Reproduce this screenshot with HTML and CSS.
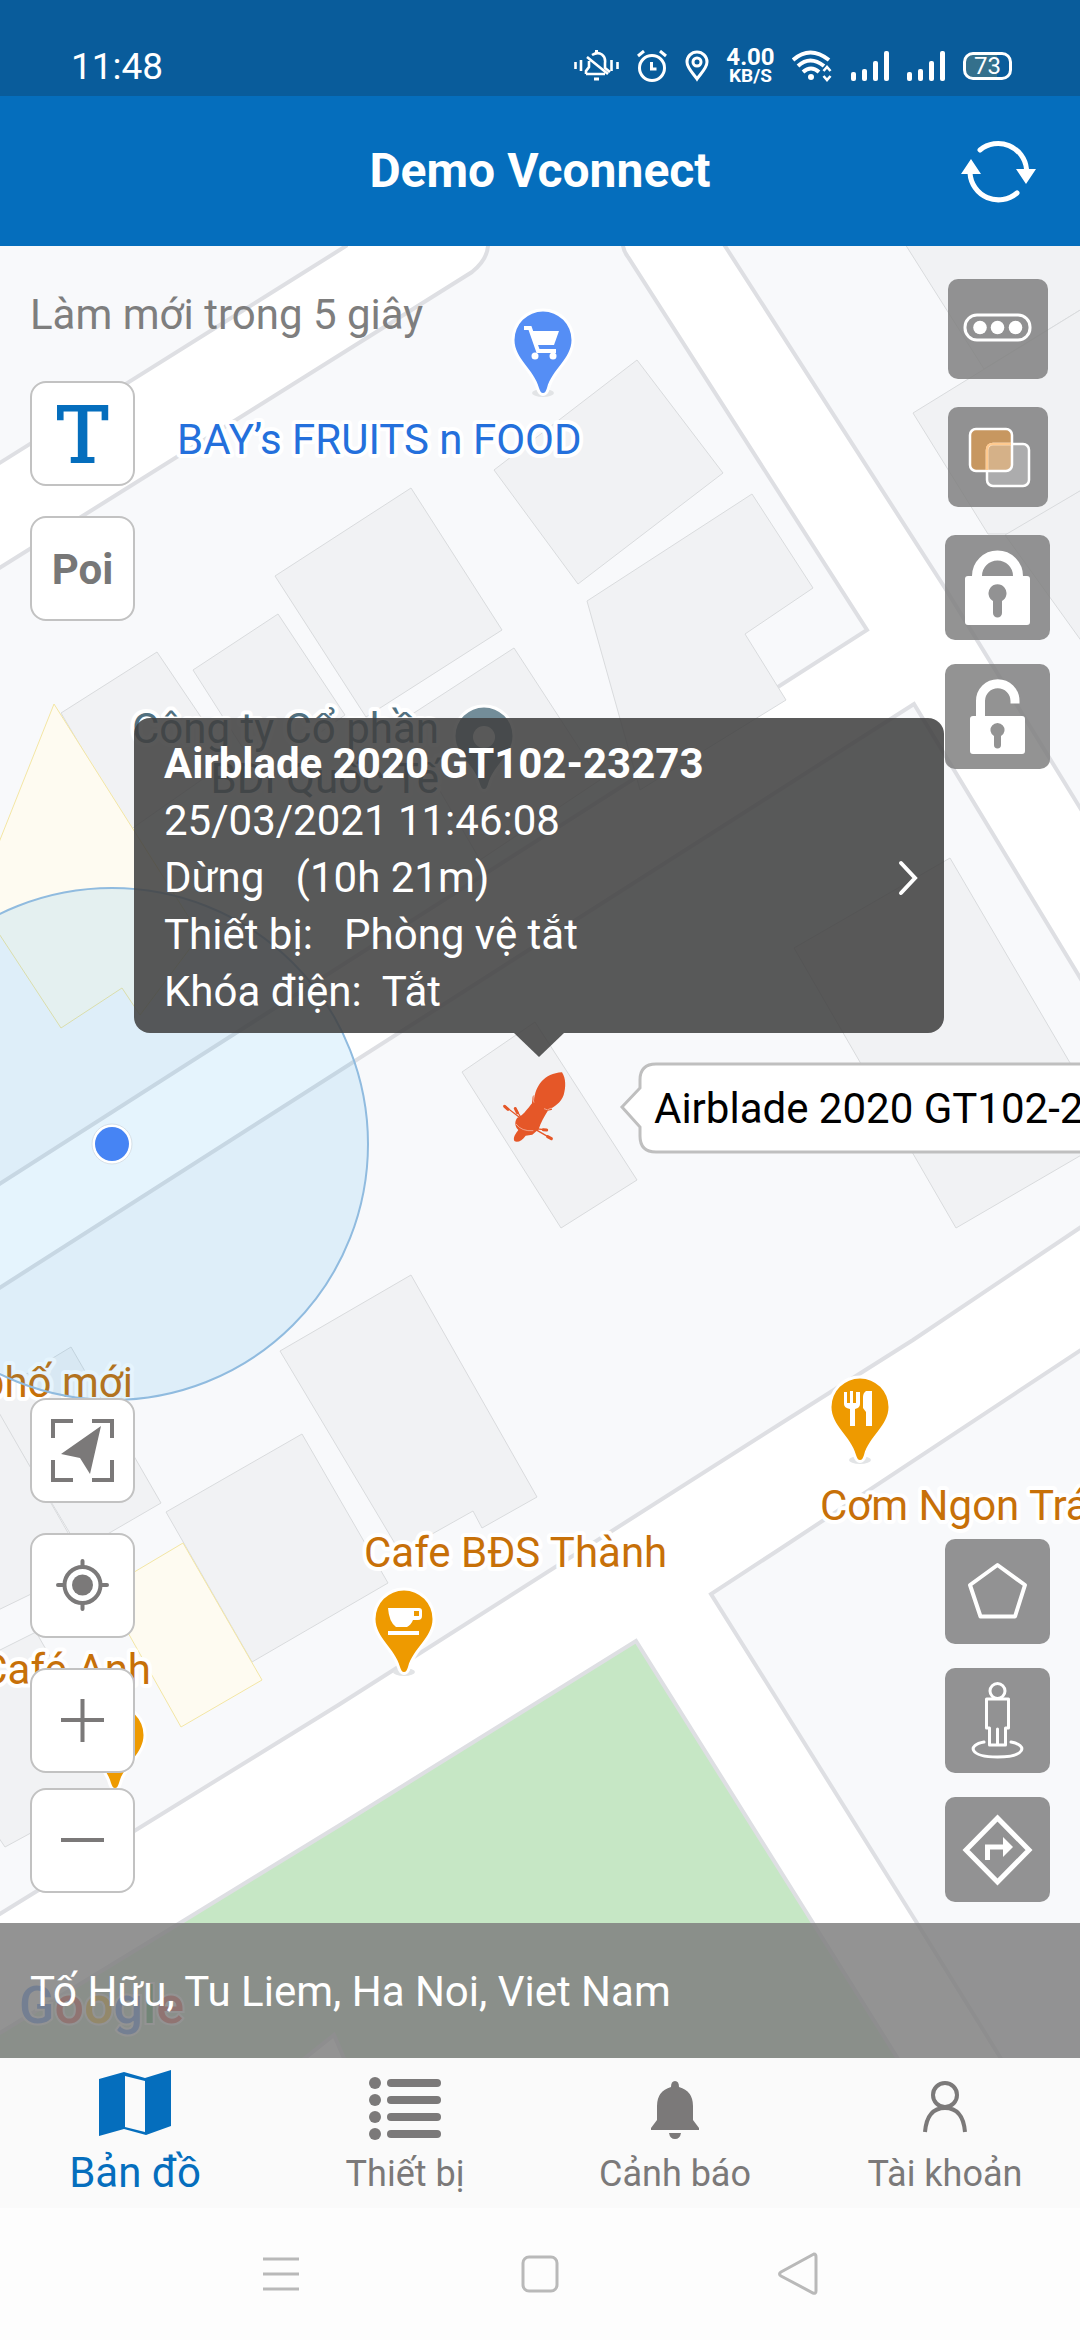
FILE: index.html
```html
<!DOCTYPE html>
<html lang="vi">
<head>
<meta charset="utf-8">
<meta name="viewport" content="width=device-width, initial-scale=1">
<title>Demo Vconnect</title>
<link rel="stylesheet" href="styles.css">
</head>
<body>
<div class="status">
  <span class="clock">11:48</span>
  <div class="status-icons">
    <svg width="45" height="32" viewBox="0 0 45 32" fill="none" stroke="#fff" stroke-width="2.6">
      <path d="M1.500 12v7M7 10v11M37.500 10v11M43.500 12v7"/>
      <path d="M12 24h19M12 24v-3l3-4v-6M18 5c8-5 14 1 13 8v5l5 4M13 7l21 17"/>
      <path d="M22.500 0v3M20 29h5" stroke-width="3"/>
    </svg>
    <svg width="30" height="32" viewBox="0 0 30 32" fill="none" stroke="#fff" stroke-width="3">
      <circle cx="15" cy="18" r="12.500"/><path d="M14.500 12v7h5M1 6l6-5M29 6l-6-5"/>
    </svg>
    <svg width="24" height="32" viewBox="0 0 24 32" fill="none" stroke="#fff" stroke-width="3">
      <path d="M12 29C8 23 2 18 2 12a10 10 0 0 1 20 0c0 6-6 11-10 17z"/><circle cx="12" cy="12" r="4"/>
    </svg>
    <span class="speed"><b>4.00</b><b class="unit">KB/S</b></span>
    <svg width="41" height="32" viewBox="0 0 41 32" fill="none" stroke="#fff" stroke-width="4">
      <path d="M1 10q17-15 36 0M6 16q12-11 26 0M11 22q8-7 16 0"/><circle cx="19" cy="27" r="3" fill="#fff" stroke="none"/>
      <path d="M31.500 21l3.500-4 3.500 4M31.500 26l3.500 4 3.500-4" stroke-width="2.600"/>
    </svg>
    <svg width="38" height="32" viewBox="0 0 38 32" fill="#fff">
      <rect x="0" y="22" width="5" height="9" rx="2"/><rect x="11" y="19" width="5" height="12" rx="2"/><rect x="22" y="11" width="5" height="20" rx="2"/><rect x="33" y="1" width="5" height="30" rx="2"/>
    </svg>
    <svg width="38" height="32" viewBox="0 0 38 32" fill="#fff">
      <rect x="0" y="22" width="5" height="9" rx="2"/><rect x="11" y="19" width="5" height="12" rx="2"/><rect x="22" y="11" width="5" height="20" rx="2"/><rect x="33" y="1" width="5" height="30" rx="2"/>
    </svg>
    <span class="battery">73</span>
  </div>
</div>

<header class="appbar">
  <h1>Demo Vconnect</h1>
  <button class="refresh" aria-label="Làm mới">
    <svg width="76" height="66" viewBox="959 137 76 66" fill="none" stroke="#fff" stroke-width="5" stroke-linecap="round">
      <path d="M979 149A28.500 28.500 0 0 1 1025.500 168M969 172A28.500 28.500 0 0 0 1016 192"/>
      <path d="M1015 168h20l-10 15zM960 173h20l-10-15z" fill="#fff" stroke="none"/>
    </svg>
  </button>
</header>

<main class="map">
  <svg class="map-canvas" viewBox="0 246 1080 1812" preserveAspectRatio="xMinYMin slice">
    <defs>
      <path id="pin" d="M0 0C-2 0-3-2-4-5C-9-24-28.500-34-28.500-53A28.500 28.500 0 0 1 28.500-53C28.500-34 9-24 4-5C3-2 2 0 0 0Z"/>
    </defs>
    <rect y="246" width="1080" height="1812" class="land"/>

    <!-- roads -->
    <g class="road">
      <path d="M-10 469L346 246V236H488V246Q487 260 472 272L-10 574Z"/>
      <path d="M623 236V246Q624 252 628 257L867 630L-10 1190V1294L914 704L1090 994V824L945 588L725 246L718 236Z"/>
      <path d="M1090 1221L913 1340L780 1424L340 1704L-10 1920V2070H1008L917 1923L780 1704L711 1594L780 1549L1090 1344Z"/>
    </g>
    <path class="park" d="M-10 2039L180 1923L340 1825L636 1641L813 1923L905 2070H349L334 2035L290 2070H-10Z"/>

    <g class="building">
      <path d="M411 488L502 630L366 717L275 576Z"/>
      <path d="M278 614L345 715L260 775L193 670Z"/>
      <path d="M157 652L230 760L130 830L61 713Z"/>
      <path d="M514 648L600 780L480 860L400 722Z"/>
      <path d="M637 360L723 473L578 584L494 470Z"/>
      <path d="M752 494L813 588L745 634L786 700L640 790L587 601Z"/>
      <path d="M900 236L984 369L1090 304V236Z"/>
      <path d="M1090 304L913 413L988 534L1010 534L1090 485Z"/>
      <path d="M1090 485L1005 535L1090 653Z"/>
      <path d="M950 858L794 948L956 1228L1090 1150V1097Z"/>
      <path d="M535 1022L462 1072L561 1228L637 1180Z"/>
      <path d="M411 1275L537 1497L482 1528L473 1511L400 1552L280 1351Z"/>
      <path d="M302 1434L388 1583L252 1662L166 1512Z"/>
      <path d="M71 1347L161 1503L80 1550L-10 1400V1396Z"/>
      <path d="M-10 1397L75 1545L60 1580L-10 1614Z"/>
      <path d="M-10 1655L36 1632L115 1770L110 1790L5 1847L-10 1825Z"/>
    </g>
    <g class="shop">
      <path d="M54 704L200 935L140 1015L122 988L61 1028L-10 920V865Z"/>
      <path d="M183 1543L262 1680L181 1727L104 1590Z"/>
    </g>

    <!-- places -->
    <g class="place blue">
      <ellipse class="pin-shadow" cx="543" cy="393" rx="11" ry="4"/>
      <use href="#pin" x="543" y="393"/>
      <path class="glyph-line" d="M524 328h6l8 23h18"/>
      <path class="glyph" d="M531 331h28l-5 14h-19z"/><circle class="glyph" cx="535" cy="356" r="3.500"/><circle class="glyph" cx="553" cy="356" r="3.500"/>
      <text x="177" y="454">BAY’s FRUITS n FOOD</text>
    </g>
    <g class="place grey">
      <use href="#pin" x="484" y="789"/><circle class="glyph" cx="484" cy="737" r="11"/>
      <text x="439" y="743" text-anchor="end">Công ty Cổ phần</text>
      <text x="439" y="793" text-anchor="end">BDI Quốc Tế</text>
    </g>
    <g class="place orange">
      <ellipse class="pin-shadow" cx="860" cy="1460" rx="11" ry="4"/>
      <use href="#pin" x="860" y="1460"/>
      <path class="glyph" d="M844 1392h3v11h3v-12h3v12h3v-11h4v12q0 4-5 5v17h-5v-17q-6-1-6-5zM866 1391h6v35h-6v-14l-3-4v-11q0-4 3-6z"/>
      <text x="820" y="1520">Cơm Ngon Trá</text>
      <ellipse class="pin-shadow" cx="404" cy="1672" rx="11" ry="4"/>
      <use href="#pin" x="404" y="1672"/>
      <path class="glyph" fill-rule="evenodd" d="M388 1608h31q3 0 3 3v5q0 4-4 4h-5q-2 5-6 7h-11q-7-5-8-19zM414 1611v5h5v-5zM388 1631h31v4h-31z"/>
      <text x="364" y="1567">Cafe BĐS Thành</text>
      <text x="133" y="1397" text-anchor="end">phố mới</text>
      <use href="#pin" x="115" y="1788"/>
      <text x="151" y="1684" text-anchor="end">Café Anh</text>
    </g>
    <text class="google" x="19" y="2023"><tspan fill="#4285f4">G</tspan><tspan fill="#ea4335">o</tspan><tspan fill="#fbbc05">o</tspan><tspan fill="#4285f4">g</tspan><tspan fill="#34a853">l</tspan><tspan fill="#ea4335">e</tspan></text>

    <!-- own position -->
    <circle class="accuracy" cx="112" cy="1144" r="256"/>
    <circle class="me-ring" cx="112" cy="1144" r="20"/>
    <circle class="me" cx="112" cy="1144" r="17"/>

    <!-- vehicle and its name tag -->
    <svg x="480" y="1050" width="120" height="110" viewBox="0 0 360 330">
      <path fill="#e55728" d="M246 67C258 85 258 112 251 135C243 158 222 172 205 180C192 200 182 218 176 238L157 254L137 257C127 272 112 279 103 273C98 262 108 250 115 240C103 228 104 212 112 203C127 198 138 182 162 152C166 108 192 70 246 67Z"/>
      <path stroke="#e55728" stroke-width="4" stroke-linecap="round" fill="none" d="M73 167L118 202M105 174L124 204M166 236L200 240M166 238L214 266M160 140L158 158M195 182L214 178"/>
      <path stroke="#e55728" stroke-width="9" stroke-linecap="round" fill="none" d="M74 169L84 178M106 176L112 188M190 239L200 240M203 260L214 266"/>
      <path stroke="#f1a58c" stroke-width="3" fill="none" d="M108 222Q125 245 160 242M162 135Q156 150 162 158M192 176Q202 184 214 174"/>
    </svg>
    <path class="tag" d="M1090 1064H656Q640 1064 640 1080V1088L622 1107L640 1127V1136Q640 1152 656 1152H1090Z"/>
    <text class="tag-text" x="654" y="1123">Airblade 2020 GT102-23273</text>
  </svg>

  <div class="controls">
    <div class="column left">
      <div class="group">
        <p class="countdown">Làm mới trong 5 giây</p>
        <button class="light type">T</button>
        <button class="light poi">Poi</button>
      </div>
      <div class="group">
        <button class="light" aria-label="Theo dõi xe">
          <svg viewBox="0 0 105 105" fill="none" stroke="#7b7979" stroke-width="4">
            <path d="M43 23H23V40M62 23H82V40M43 82H23V62M62 82H82V62"/>
            <path d="M71 28L31 56L50 60L60 76Z" fill="#7b7979" stroke="none"/>
          </svg>
        </button>
        <button class="light" aria-label="Vị trí của tôi">
          <svg viewBox="0 0 105 105" fill="none" stroke="#7b7979" stroke-width="4" stroke-linecap="round">
            <circle cx="52.500" cy="52" r="18"/><circle cx="52.500" cy="52" r="10.500" fill="#7b7979" stroke="none"/>
            <path d="M52.500 28V34M52.500 70V76M28 52H34M71 52H77"/>
          </svg>
        </button>
        <div class="zoom">
          <button class="light" aria-label="Phóng to">
            <svg viewBox="0 0 105 105" stroke="#7b7979" stroke-width="4"><path d="M31 52H74M52.500 31V74"/></svg>
          </button>
          <button class="light" aria-label="Thu nhỏ">
            <svg viewBox="0 0 105 105" stroke="#7b7979" stroke-width="4"><path d="M31 52H74"/></svg>
          </button>
        </div>
      </div>
    </div>

    <div class="column right">
      <div class="group">
        <button class="dark small" aria-label="Thêm">
          <svg viewBox="0 0 100 100" fill="none" stroke="#fff" stroke-width="3">
            <rect x="17" y="36" width="65" height="25" rx="12"/>
            <g fill="#fff" stroke="none"><circle cx="32" cy="48.500" r="6.800"/><circle cx="49.500" cy="48.500" r="6.800"/><circle cx="67.500" cy="48.500" r="6.800"/></g>
          </svg>
        </button>
        <button class="dark small" aria-label="Lớp bản đồ">
          <svg viewBox="0 0 100 100" fill="none" stroke="#fff" stroke-width="2.500">
            <rect x="22" y="22" width="42" height="42" rx="6" fill="#c79760"/>
            <rect x="39" y="37" width="42" height="42" rx="6" fill="#fff" fill-opacity=".25"/>
            <path d="M39 63V43Q39 37 45 37H63" stroke="#ffca8f"/>
          </svg>
        </button>
        <button class="dark" aria-label="Khóa">
          <svg viewBox="0 0 105 105">
            <path d="M32 43V41A20.500 20.500 0 0 1 73 41V43" fill="none" stroke="#fff" stroke-width="10"/>
            <path fill="#fff" fill-rule="evenodd" d="M23 41H82Q85 41 85 44V87Q85 90 82 90H23Q20 90 20 87V44Q20 41 23 41ZM48 66V78a4.500 4.500 0 0 0 9 0V66A9 9 0 1 0 48 66Z"/>
          </svg>
        </button>
        <button class="dark" aria-label="Mở khóa">
          <svg viewBox="0 0 105 105">
            <path d="M35.500 54V37A17.200 17.200 0 0 1 70 37V39.500" fill="none" stroke="#fff" stroke-width="9"/>
            <path fill="#fff" fill-rule="evenodd" d="M28 52H77Q80 52 80 55V87Q80 90 77 90H28Q25 90 25 87V55Q25 52 28 52ZM49 72V81a3.500 3.500 0 0 0 7 0V72A7 7 0 1 0 49 72Z"/>
          </svg>
        </button>
      </div>
      <div class="group">
        <button class="dark" aria-label="Vùng">
          <svg viewBox="0 0 105 105" fill="none" stroke="#fff" stroke-width="4" stroke-linejoin="round"><path d="M52.500 26L80 46L70 77.500H35.500L25 46Z"/></svg>
        </button>
        <button class="dark" aria-label="Chế độ xem phố">
          <svg viewBox="0 0 105 105" fill="none" stroke="#fff" stroke-width="3" stroke-linejoin="round" stroke-linecap="round">
            <circle cx="52.500" cy="23" r="7.500"/>
            <path d="M41.500 31H63.500V60H60.500V77H44.500V60H41.500ZM52.500 61V76M39 74C22 77 24 89 52.500 89S83 77 66 74"/>
          </svg>
        </button>
        <button class="dark" aria-label="Chỉ đường">
          <svg viewBox="0 0 105 105" fill="none" stroke="#fff" stroke-width="5">
            <path d="M52.500 21L84 53L52.500 85L21 53Z"/><path d="M42.500 63V50H60"/><path d="M58 40L68 50L58 60Z" fill="#fff" stroke="none"/>
          </svg>
        </button>
      </div>
    </div>
  </div>

  <a class="popup" href="#detail">
    <span class="popup-text"><strong>Airblade 2020 GT102-23273</strong>
25/03/2021 11:46:08
Dừng   (10h 21m)
Thiết bị:   Phòng vệ tắt
Khóa điện:  Tắt</span>
    <svg width="20" height="36" viewBox="0 0 20 36" fill="none" stroke="#fff" stroke-width="4" stroke-linecap="round"><path d="M3 3L17 18L3 33"/></svg>
  </a>

  <p class="address">Tố Hữu, Tu Liem, Ha Noi, Viet Nam</p>
</main>

<nav class="tabs">
  <a class="tab active" href="#map">
    <svg viewBox="0 0 72 72"><path fill="#056ebd" fill-rule="evenodd" d="M0 9L25 2L46 8L72 0V56L47 65L25 59L0 66ZM26 6V57L46 62V11Z"/></svg>
    <span>Bản đồ</span>
  </a>
  <a class="tab" href="#devices">
    <svg viewBox="0 0 72 72" fill="#7b7979">
      <circle cx="6" cy="13" r="6"/><circle cx="6" cy="30" r="6"/><circle cx="6" cy="47" r="6"/><circle cx="6" cy="64" r="6"/>
      <rect x="18" y="9" width="54" height="8" rx="4"/><rect x="18" y="26" width="54" height="8" rx="4"/><rect x="18" y="43" width="54" height="8" rx="4"/><rect x="18" y="60" width="54" height="8" rx="4"/>
    </svg>
    <span>Thiết bị</span>
  </a>
  <a class="tab" href="#alerts">
    <svg viewBox="0 0 72 72" fill="#7b7979"><path d="M36 11Q40 11 40 17Q54 21 54 36V50L60 58V60H12V58L18 50V36Q18 21 32 17Q32 11 36 11ZM30 63H42Q41 69 36 69T30 63Z"/></svg>
    <span>Cảnh báo</span>
  </a>
  <a class="tab" href="#account">
    <svg viewBox="0 0 72 72" fill="none" stroke="#7b7979" stroke-width="4"><circle cx="36" cy="25" r="12"/><path d="M16 62Q18 38 36 38T56 62"/></svg>
    <span>Tài khoản</span>
  </a>
</nav>

<div class="sysnav">
  <button aria-label="Gần đây"><svg viewBox="0 0 44 44"><path d="M4 7H40M4 22H40M4 37H40"/></svg></button>
  <button aria-label="Trang chủ"><svg viewBox="0 0 44 44"><rect x="5" y="5" width="34" height="34" rx="6"/></svg></button>
  <button aria-label="Quay lại"><svg viewBox="0 0 44 44"><path d="M37 2Q39 2 39 5V39Q39 42 36 41L4 24Q1 22 4 20Z"/></svg></button>
</div>
</body>
</html>
```

FILE: styles.css
```css
* {
  box-sizing: border-box;
}

body {
  margin: 0;
  min-height: 100vh;
  display: flex;
  flex-direction: column;
  font-family: Roboto, "Noto Sans", sans-serif;
  font-size: 42px;
  background: #fdfdfd;
}

button {
  padding: 0;
  border: 0;
  background: none;
  font: inherit;
}

svg {
  display: block;
}

p,
h1 {
  margin: 0;
}

a {
  color: inherit;
  text-decoration: none;
}

/* status bar */
.status {
  height: 96px;
  padding: 36px 68px 0 71px;
  display: flex;
  justify-content: space-between;
  background: #095c9b;
  color: #fff;
}

.clock {
  font-size: 37px;
  line-height: 61px;
}

.status-icons {
  height: 60px;
  display: flex;
  align-items: center;
  gap: 18px;
}

.speed {
  width: 47px;
  display: flex;
  flex-direction: column;
  align-items: center;
  font-size: 24px;
  line-height: 19px;
}

.unit {
  font-size: 19px;
  line-height: 17px;
}

.battery {
  width: 49px;
  height: 28px;
  border: 3px solid #fff;
  border-radius: 10px;
  background: linear-gradient(90deg, #34708c 72%, transparent 72%);
  font-size: 24px;
  line-height: 23px;
  text-align: center;
}

/* title bar */
.appbar {
  height: 150px;
  padding: 0 44px;
  display: grid;
  grid-template-columns: 76px 1fr 76px;
  align-items: center;
  background: #056ebd;
  color: #fff;
}

.appbar h1 {
  grid-column: 2;
  font-size: 48px;
  line-height: 60px;
  text-align: center;
}

/* map */
.map {
  position: relative;
  flex: 1;
  display: flex;
  flex-direction: column;
  overflow: hidden;
  background: #f8f9fb;
}

.map-canvas {
  position: absolute;
  inset: 0;
  width: 100%;
  height: 100%;
}

.land {
  fill: #f8f9fb;
}

.road {
  fill: #fff;
  stroke: #dedfe3;
  stroke-width: 4px;
}

.park {
  fill: #c6e7c5;
  stroke: #dedfe3;
  stroke-width: 4px;
}

.building {
  fill: #f1f2f4;
  stroke: #d9dbdd;
}

.shop {
  fill: #fefbf1;
  stroke: #f3e6a4;
}

.place text {
  font-size: 42px;
  stroke: #fff;
  stroke-width: 8px;
  stroke-linejoin: round;
  paint-order: stroke;
}

.place use {
  stroke: #fff;
  stroke-width: 6px;
  paint-order: stroke;
}

.pin-shadow {
  fill: #e2e4e6;
}

.glyph {
  fill: #fff;
}

.glyph-line {
  fill: none;
  stroke: #fff;
  stroke-width: 4px;
}

.blue {
  fill: #558ef5;
}

.blue text {
  fill: #2470dc;
}

.grey {
  fill: #738d99;
}

.grey text {
  fill: #51707f;
}

.orange {
  fill: #ee9a00;
}

.orange text {
  fill: #c77008;
}

.google {
  font-size: 52px;
  font-weight: 500;
  stroke: #fff;
  stroke-width: 4px;
  paint-order: stroke;
}

.accuracy {
  fill: #0091eb;
  fill-opacity: 0.1;
  stroke: #90bbdf;
  stroke-width: 2px;
}

.me-ring {
  fill: #fff;
  stroke: #d6e0e8;
}

.me {
  fill: #4684f4;
}

.tag {
  fill: #fff;
  stroke: #bfbfbf;
  stroke-width: 3px;
}

.tag-text {
  font-size: 42px;
  fill: #000;
}

/* buttons over the map */
.controls {
  position: relative;
  flex: 1;
  display: flex;
  justify-content: space-between;
  padding: 33px 30px 21px;
}

.column {
  display: flex;
  flex-direction: column;
  justify-content: space-between;
}

.group {
  display: flex;
  flex-direction: column;
}

.left {
  padding-bottom: 9px;
}

.left .group {
  align-items: flex-start;
  gap: 30px;
}

.right .group {
  align-items: center;
  gap: 24px;
}

.zoom {
  display: flex;
  flex-direction: column;
  gap: 15px;
}

.countdown {
  line-height: 72px;
  color: #7e7e7e;
}

.light {
  width: 105px;
  height: 105px;
  border: 2px solid #c2c2c2;
  border-radius: 16px;
  background: #fff;
}

.light svg {
  width: 105px;
  height: 105px;
  margin: -2px;
}

.type {
  font-family: "DejaVu Serif", serif;
  font-size: 76px;
  line-height: 105px;
  color: #056ebd;
  -webkit-text-stroke: 2px #056ebd;
}

.poi {
  font-size: 42px;
  line-height: 103px;
  font-weight: 700;
  color: #777;
}

.dark {
  width: 105px;
  height: 105px;
  border-radius: 10px;
  background: rgba(126, 126, 126, 0.84);
}

.small {
  width: 100px;
  height: 100px;
  margin-bottom: 4px;
}

/* vehicle popup */
.popup {
  position: absolute;
  top: 472px;
  left: 134px;
  right: 136px;
  display: flex;
  align-items: center;
  justify-content: space-between;
  padding: 17px 26px 13px 30px;
  border-radius: 16px;
  background: rgba(64, 64, 64, 0.87);
  color: #fff;
  line-height: 57px;
}

.popup::after {
  content: "";
  position: absolute;
  top: 100%;
  left: 50%;
  margin-left: -25px;
  border: solid transparent;
  border-width: 24px 25px 0;
  border-top-color: rgba(64, 64, 64, 0.87);
}

.popup-text {
  white-space: pre;
}

.address {
  position: relative;
  padding: 2px 30px 0;
  background: rgba(126, 126, 126, 0.84);
  color: #fff;
  line-height: 133px;
}

/* tabs */
.tabs {
  height: 150px;
  display: grid;
  grid-template-columns: repeat(4, 1fr);
  background: #fafafa;
}

.tab {
  padding-top: 12px;
  display: flex;
  flex-direction: column;
  align-items: center;
  gap: 8px;
  font-size: 36px;
  line-height: 48px;
  color: #7b7979;
}

.tab svg {
  width: 72px;
  height: 72px;
}

.active {
  font-size: 42px;
  line-height: 46px;
  color: #056ebd;
}

/* system navigation */
.sysnav {
  height: 132px;
  padding: 0 14%;
  display: grid;
  grid-template-columns: repeat(3, 1fr);
  place-items: center;
}

.sysnav svg {
  width: 44px;
  height: 44px;
  fill: none;
  stroke: #b9b9b9;
  stroke-width: 3px;
}
```
